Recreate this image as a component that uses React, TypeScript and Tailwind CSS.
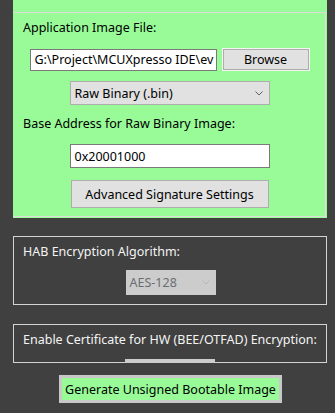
import React from "react";

const Chevron = ({ color }: { color: string }) => (
  <svg width="8" height="5" viewBox="0 0 8 5" className="shrink-0">
    <path d="M0.5 0.5 L4 4 L7.5 0.5" fill="none" stroke={color} strokeWidth="1" />
  </svg>
);

export default function App() {
  return (
    <div className="w-[335px] h-[413px] bg-[#404040] pl-[13px] font-['Noto_Sans',sans-serif] text-[12.5px] leading-[17px] overflow-hidden">
      {/* Green group */}
      <div className="w-[314px] h-[218px] bg-[#98fb98] pt-[12px] pr-[1px] pb-[1px]">
        <div className="h-full border-t border-r border-b border-[#dcdcdc] flex flex-col items-center text-black">
          <div className="self-start pl-[10px] mt-[6px]">Application Image File:</div>
          <div className="flex items-center gap-[5px] mt-[12px] ml-[1px]">
            <div className="w-[187px] h-[22px] bg-white border border-[#7a7a7a] pl-[4px] overflow-hidden whitespace-nowrap flex items-center">
              G:\Project\MCUXpresso IDE\ev
            </div>
            <div className="w-[88px] h-[23px] bg-[#f4f4f4] p-[1px]">
              <div className="w-full h-full bg-[#e1e1e1] border border-[#adadad] flex items-center justify-center">
                Browse
              </div>
            </div>
          </div>
          <div className="w-[200px] h-[24px] mt-[10px] ml-[1px] bg-[#e1e1e1] border border-[#adadad] flex items-center justify-between pl-[4px] pr-[6px]">
            <span>Raw Binary (.bin)</span>
            <Chevron color="#606060" />
          </div>
          <div className="self-start pl-[10px] mt-[10px]">Base Address for Raw Binary Image:</div>
          <div className="w-[200px] h-[24px] mt-[12px] ml-[1px] bg-white border border-[#7a7a7a] pl-[4px] flex items-center">
            0x20001000
          </div>
          <div className="w-[198px] h-[28px] mt-[12px] ml-[1px] bg-[#e1e1e1] border border-[#adadad] flex items-center justify-center">
            Advanced Signature Settings
          </div>
        </div>
      </div>

      {/* HAB group */}
      <div className="w-[314px] h-[69px] mt-[18px] border border-[#d4d4d4] flex flex-col items-center">
        <div className="self-start pl-[9px] mt-[6px] text-[#f4f4f4]">HAB Encryption Algorithm:</div>
        <div className="w-[90px] h-[25px] mt-[10px] ml-[1px] bg-[#cccccc] flex items-center justify-between pl-[4px] pr-[6px] text-[#6a6e74]">
          <span>AES-128</span>
          <Chevron color="#b4b4b4" />
        </div>
      </div>

      {/* Certificate group */}
      <div className="relative w-[314px] h-[39px] mt-[19px] border border-[#d4d4d4]">
        <div className="pl-[9px] mt-[6px] text-[#f4f4f4] whitespace-nowrap">
          Enable Certificate for HW (BEE/OTFAD) Encryption:
        </div>
        <div className="absolute left-[111px] bottom-[-1px] w-[90px] h-[4px] bg-[#cccccc]" />
      </div>

      {/* Generate button */}
      <div className="w-[314px] flex justify-center mt-[12px]">
        <div className="w-[223px] h-[28px] ml-[1px] border-[3px] border-[#c8c8c8] bg-[#98fb98] flex items-center justify-center text-black">
          Generate Unsigned Bootable Image
        </div>
      </div>
    </div>
  );
}
